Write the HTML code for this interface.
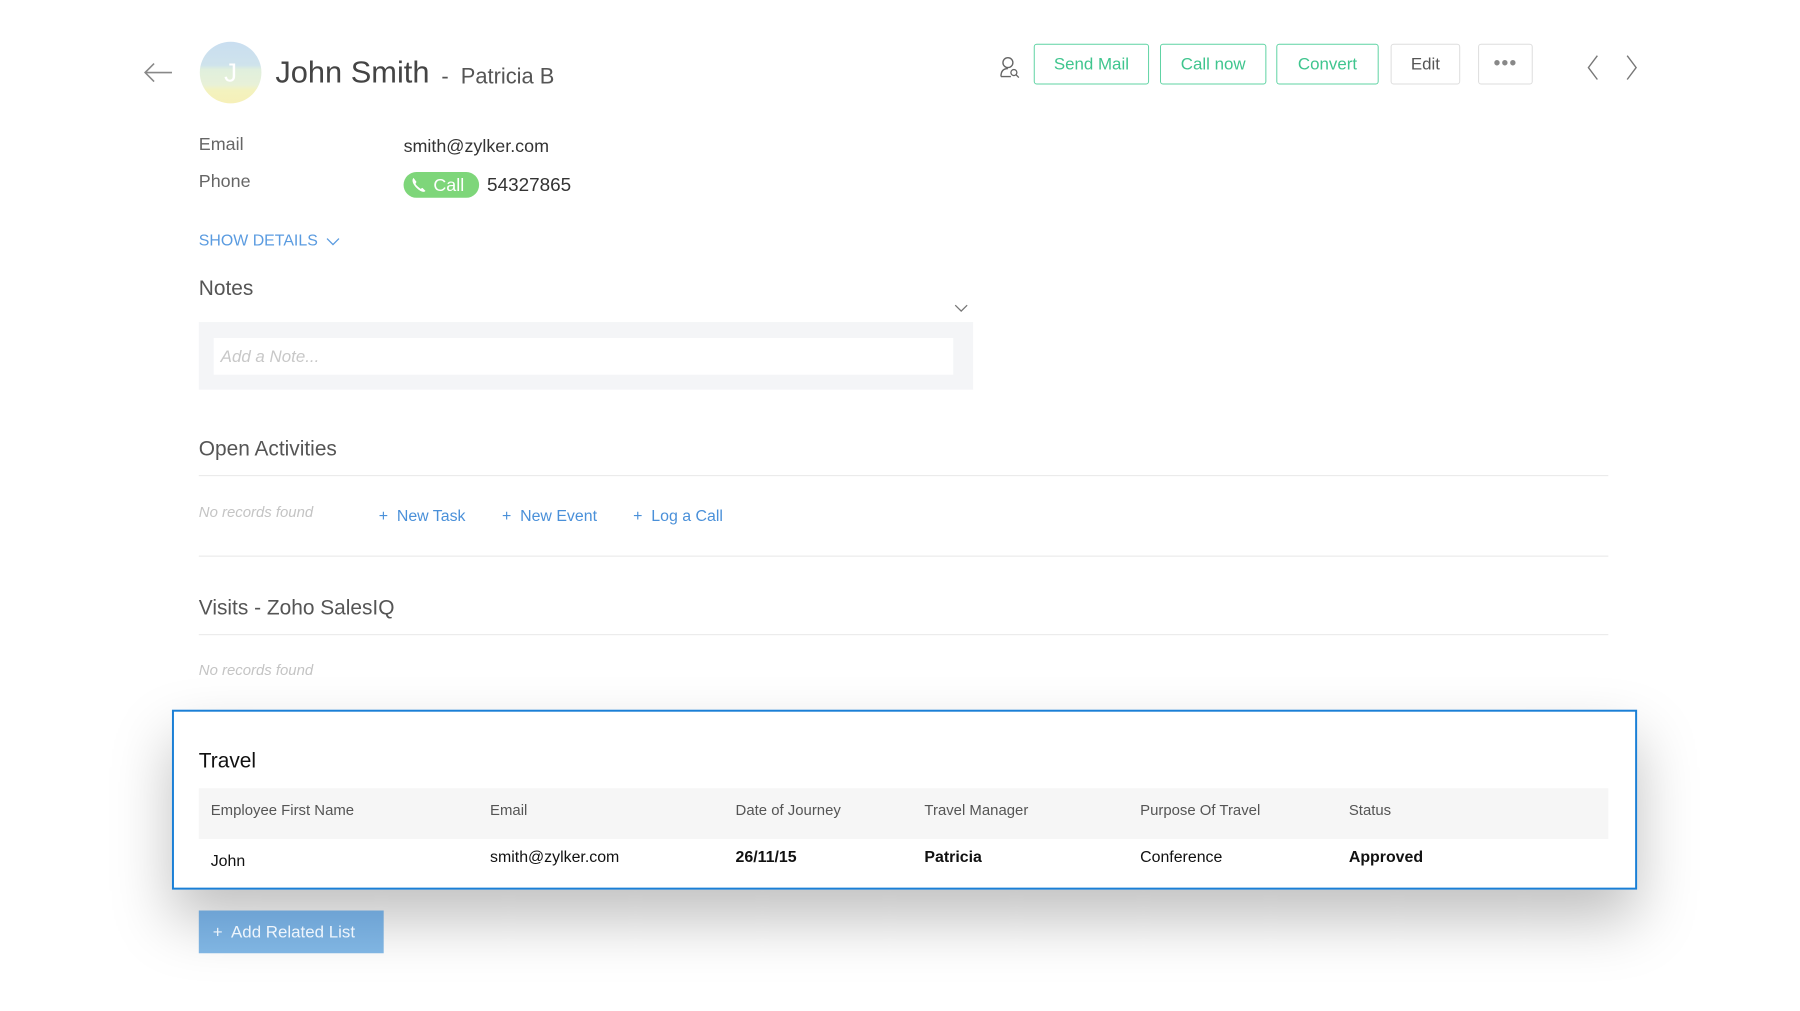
<!DOCTYPE html>
<html><head><meta charset="utf-8"><style>
*{margin:0;padding:0;box-sizing:border-box}
body{width:1800px;height:1011px;background:#fff;font-family:"Liberation Sans",sans-serif;position:relative;overflow:hidden;color:#333}
#w{position:absolute;left:0;top:0;width:1800px;height:1011px;transform:scale(0.994);transform-origin:0 0}
.a{position:absolute;white-space:nowrap}
.btn{position:absolute;top:44px;height:41px;border:1.5px solid #5fd3a3;border-radius:3px;color:#3fc58e;font-size:17px;display:flex;align-items:center;justify-content:center}
.gbtn{border-color:#ddd;color:#555}
.lbl{color:#666;font-size:18px}
.h{font-size:21px;color:#555}
.line{position:absolute;left:200px;width:1418px;height:1px;background:#e8e8e8}
.blue{color:#4a90d9;font-size:16px}
.nr{color:#c4c4c4;font-style:italic;font-size:15px}
.th{font-size:15px;color:#555;top:807px}
.td{font-size:16px;color:#111;top:854px}
</style></head><body><div id="w">
<svg class="a" style="left:143px;top:62px" width="32" height="22"><path d="M30 11H3M12 2L3 11l9 9" fill="none" stroke="#888" stroke-width="1.6"/></svg>
<div class="a" style="left:201px;top:42px;width:62px;height:62px;border-radius:50%;background:linear-gradient(#c9def0 0%,#cfe3ec 38%,#e0efdd 45%,#e8f1d8 70%,#f3f2bf 78%,#f6f0b8 100%);color:#fff;font-size:26px;text-align:center;line-height:62px">J</div>
<div class="a" style="left:277px;top:55px;font-size:31px;color:#444">John Smith</div>
<div class="a" style="left:444px;top:64px;font-size:22px;color:#555">- &nbsp;Patricia B</div>
<svg class="a" style="left:1005px;top:56px" width="22" height="24"><circle cx="9" cy="7" r="5" fill="none" stroke="#666" stroke-width="1.4"/><path d="M2 21c0-6 3-8 7-8M2 21h10" fill="none" stroke="#666" stroke-width="1.4"/><circle cx="15" cy="17" r="3" fill="none" stroke="#666" stroke-width="1.3"/><path d="M17 19l3 3" stroke="#666" stroke-width="1.3"/></svg>
<div class="btn" style="left:1040px;width:116px">Send Mail</div>
<div class="btn" style="left:1167px;width:107px">Call now</div>
<div class="btn" style="left:1284px;width:103px">Convert</div>
<div class="btn gbtn" style="left:1399px;width:70px">Edit</div>
<div class="btn gbtn" style="left:1487px;width:55px;font-size:20px;color:#888;letter-spacing:1px">•••</div>
<svg class="a" style="left:1592px;top:54px" width="60" height="28"><path d="M15 2L6 14l9 12M45 2l9 12-9 12" fill="none" stroke="#777" stroke-width="1.4"/></svg>
<div class="a lbl" style="left:200px;top:135px">Email</div>
<div class="a" style="left:406px;top:137px;font-size:18px;color:#333">smith@zylker.com</div>
<div class="a lbl" style="left:200px;top:172px">Phone</div>
<div class="a" style="left:406px;top:173px;width:76px;height:26px;border-radius:13px;background:#7ed67a;color:#fff;font-size:18px;line-height:26px;padding-left:30px">Call</div>
<svg class="a" style="left:413px;top:178px" width="16" height="16"><path d="M3 1c-2 2-1 6 3 10s8 5 9 3l-3-3-2 1c-1-1-4-3-5-5l1-2z" fill="#fff"/></svg>
<div class="a" style="left:490px;top:176px;font-size:19px;color:#333">54327865</div>
<div class="a" style="left:200px;top:234px;font-size:16px;color:#5a9be0">SHOW DETAILS</div>
<svg class="a" style="left:328px;top:238px" width="14" height="10"><path d="M1 2l6 6 6-6" fill="none" stroke="#5a9be0" stroke-width="1.3"/></svg>
<div class="a h" style="left:200px;top:279px">Notes</div>
<svg class="a" style="left:960px;top:305px" width="14" height="10"><path d="M1 2l6 6 6-6" fill="none" stroke="#777" stroke-width="1.3"/></svg>
<div class="a" style="left:200px;top:324px;width:779px;height:68px;background:#f4f5f7"></div>
<div class="a" style="left:215px;top:340px;width:744px;height:37px;background:#fff;color:#c8c8c8;font-style:italic;font-size:17px;line-height:37px;padding-left:7px">Add a Note...</div>
<div class="a h" style="left:200px;top:440px">Open Activities</div>
<div class="line" style="top:478px"></div>
<div class="a nr" style="left:200px;top:507px">No records found</div>
<div class="a blue" style="left:381px;top:511px">+&nbsp; New Task</div>
<div class="a blue" style="left:505px;top:511px">+&nbsp; New Event</div>
<div class="a blue" style="left:637px;top:511px">+&nbsp; Log a Call</div>
<div class="line" style="top:559px"></div>
<div class="a h" style="left:200px;top:600px">Visits - Zoho SalesIQ</div>
<div class="line" style="top:638px"></div>
<div class="a nr" style="left:200px;top:666px">No records found</div>
<div class="a" style="left:173px;top:714px;width:1474px;height:181px;border:2px solid #1a7fd6;background:#fff;box-shadow:0 30px 60px rgba(0,0,0,0.25)"></div>
<div class="a" style="left:200px;top:754px;font-size:21px;color:#111">Travel</div>
<div class="a" style="left:200px;top:793px;width:1418px;height:51px;background:#f6f6f6"></div>
<div class="a th" style="left:212px">Employee First Name</div>
<div class="a th" style="left:493px">Email</div>
<div class="a th" style="left:740px">Date of Journey</div>
<div class="a th" style="left:930px">Travel Manager</div>
<div class="a th" style="left:1147px">Purpose Of Travel</div>
<div class="a th" style="left:1357px">Status</div>
<div class="a td" style="left:212px;top:858px">John</div>
<div class="a td" style="left:493px">smith@zylker.com</div>
<div class="a td" style="left:740px;font-weight:bold">26/11/15</div>
<div class="a td" style="left:930px;font-weight:bold">Patricia</div>
<div class="a td" style="left:1147px">Conference</div>
<div class="a td" style="left:1357px;font-weight:bold">Approved</div>
<div class="a" style="left:200px;top:916px;width:186px;height:43px;background:linear-gradient(#6ea3d4,#80b5e2);color:#eef5fc;font-size:17px;line-height:43px;padding-left:14px">+&nbsp; Add Related List</div>
</div></body></html>
